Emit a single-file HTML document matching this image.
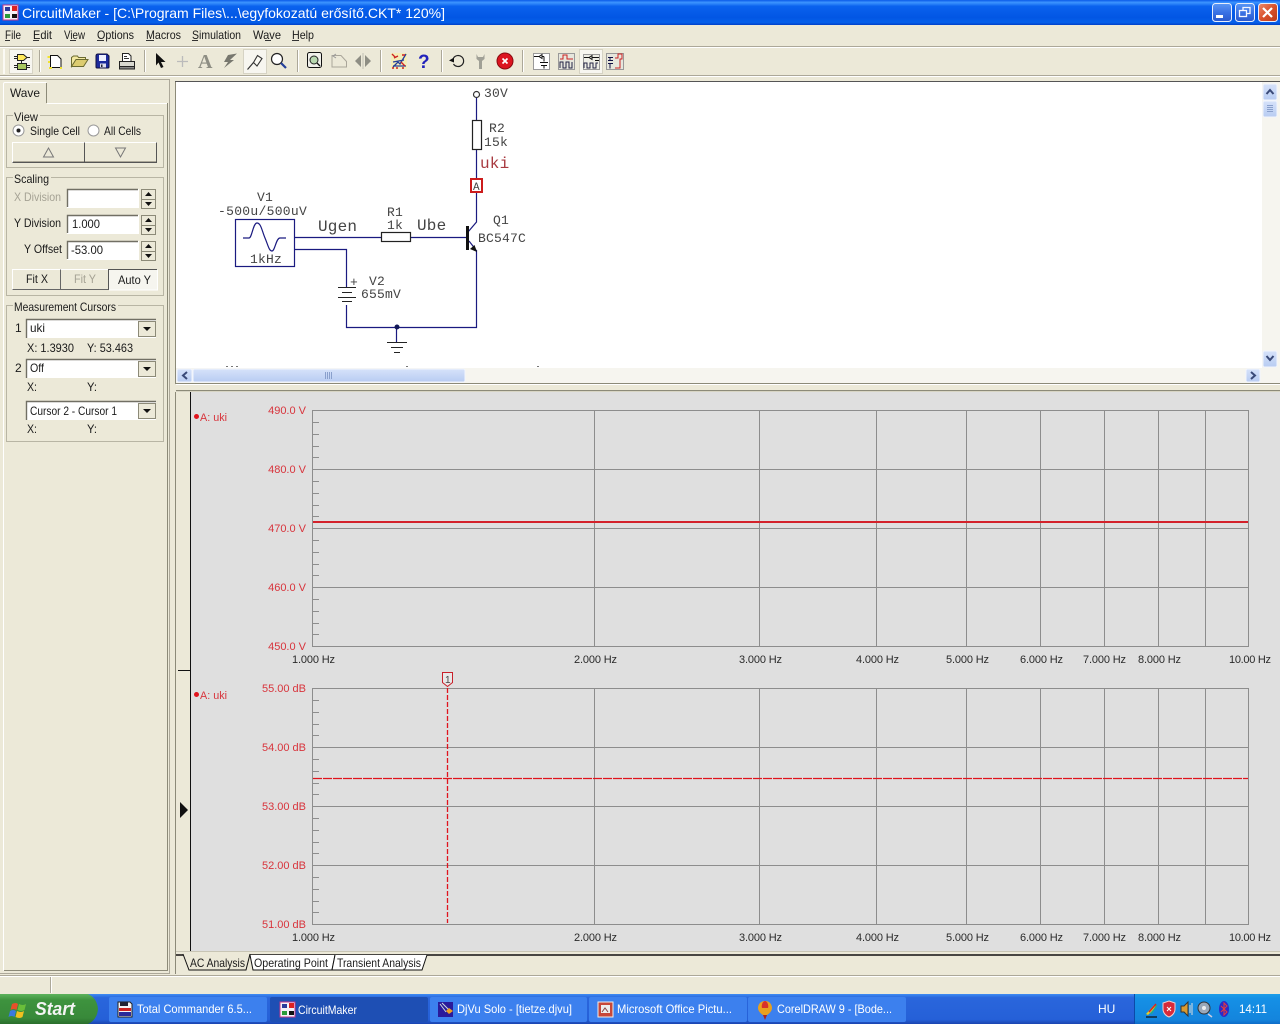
<!DOCTYPE html>
<html><head><meta charset="utf-8"><title>CircuitMaker</title>
<style>
html,body{margin:0;padding:0;background:#ece9d8;width:1280px;height:1024px;overflow:hidden}
svg{display:block;position:absolute;left:0;top:0}
text{font-family:"Liberation Sans",sans-serif;font-size:12px;fill:#1a1a1a;white-space:pre}
.m{font-family:"Liberation Mono",monospace;font-size:13px;fill:#444;letter-spacing:.2px}
.b{font-size:16px;letter-spacing:.2px}
.y{font-size:11px;fill:#d8343c;text-anchor:end}
.x{font-size:11px;fill:#2a2a2a}
.l{font-size:11px;fill:#d8343c}
.t{fill:#fff;font-size:12px}
</style></head><body>
<svg width="1280" height="1024" viewBox="0 0 1280 1024" xmlns="http://www.w3.org/2000/svg">
<defs>
<linearGradient id="tb" x1="0" y1="0" x2="0" y2="1"><stop offset="0" stop-color="#0a5ae8"/><stop offset=".1" stop-color="#3d95ff"/><stop offset=".25" stop-color="#0a62ee"/><stop offset=".7" stop-color="#0256e4"/><stop offset=".9" stop-color="#0560ea"/><stop offset="1" stop-color="#0040c8"/></linearGradient>
<linearGradient id="task" x1="0" y1="0" x2="0" y2="1"><stop offset="0" stop-color="#3f8cf3"/><stop offset=".12" stop-color="#2a66dc"/><stop offset=".85" stop-color="#2560d8"/><stop offset="1" stop-color="#1a44b0"/></linearGradient>
<linearGradient id="st" x1="0" y1="0" x2="0" y2="1"><stop offset="0" stop-color="#5db35d"/><stop offset=".2" stop-color="#3e933e"/><stop offset=".8" stop-color="#38893a"/><stop offset="1" stop-color="#2a6e2c"/></linearGradient>
<linearGradient id="btn" x1="0" y1="0" x2="0" y2="1"><stop offset="0" stop-color="#5a97f5"/><stop offset=".5" stop-color="#3a72e4"/><stop offset="1" stop-color="#2a58cc"/></linearGradient>
<linearGradient id="cl" x1="0" y1="0" x2="1" y2="1"><stop offset="0" stop-color="#ec8a6c"/><stop offset=".5" stop-color="#d9512c"/><stop offset="1" stop-color="#bb3a1a"/></linearGradient>
<linearGradient id="tray" x1="0" y1="0" x2="0" y2="1"><stop offset="0" stop-color="#1c9ee8"/><stop offset=".15" stop-color="#1590e6"/><stop offset=".85" stop-color="#1485dd"/><stop offset="1" stop-color="#0f6cc8"/></linearGradient>
<linearGradient id="sb" x1="0" y1="0" x2="0" y2="1"><stop offset="0" stop-color="#d6e2fa"/><stop offset="1" stop-color="#b8ccf2"/></linearGradient>
</defs>

<rect width="1280" height="1024" fill="#ece9d8"/>
<!-- title bar -->
<rect width="1280" height="25" fill="url(#tb)"/>
<rect x="3" y="5" width="15" height="15" fill="#f4f0f8" stroke="#c33a8a"/>
<rect x="5" y="7" width="5" height="4" fill="#2a3a9a"/><rect x="12" y="6" width="5" height="5" fill="#d22"/><rect x="5" y="14" width="5" height="4" fill="#2a9a3a"/><rect x="12" y="14" width="5" height="4" fill="#111"/>
<text x="22" y="18" textLength="423" lengthAdjust="spacingAndGlyphs" style="font-size:14px;fill:#fff">CircuitMaker - [C:\Program Files\...\egyfokozatú erősítő.CKT* 120%]</text>
<g stroke="#e8eefc" stroke-width="1">
<rect x="1212.5" y="3.5" width="19" height="18" rx="3" fill="url(#btn)"/>
<rect x="1235.5" y="3.5" width="19" height="18" rx="3" fill="url(#btn)"/>
<rect x="1258.5" y="3.5" width="19" height="18" rx="3" fill="url(#cl)"/>
</g>
<rect x="1216" y="15" width="7" height="3" fill="#fff"/>
<g fill="none" stroke="#f4f6ff" stroke-width="1.3"><rect x="1239.5" y="10.5" width="7" height="6"/><path d="M1243 10V7.5h7v6h-3"/></g>
<path d="M1263 8l9 9M1272 8l-9 9" stroke="#fff" stroke-width="2.2"/>

<!-- menu -->
<g>
<text x="5" y="39" textLength="16" lengthAdjust="spacingAndGlyphs">File</text><text x="33" y="39" textLength="19" lengthAdjust="spacingAndGlyphs">Edit</text><text x="64" y="39" textLength="21" lengthAdjust="spacingAndGlyphs">View</text><text x="97" y="39" textLength="37" lengthAdjust="spacingAndGlyphs">Options</text><text x="146" y="39" textLength="35" lengthAdjust="spacingAndGlyphs">Macros</text><text x="192" y="39" textLength="49" lengthAdjust="spacingAndGlyphs">Simulation</text><text x="253" y="39" textLength="28" lengthAdjust="spacingAndGlyphs">Wave</text><text x="292" y="39" textLength="22" lengthAdjust="spacingAndGlyphs">Help</text>
<path d="M5 40.500h5M33 40.500h6M70 40.500h6M97 40.500h7M146 40.500h8M192 40.500h6M265 40.500h6M292 40.500h7" stroke="#333"/>
</g>

<!-- toolbar -->
<rect x="0" y="46" width="1280" height="1" fill="#aca899"/><rect x="0" y="47" width="1280" height="1" fill="#fff"/>
<rect x="0" y="75" width="1280" height="1" fill="#aca899"/><rect x="0" y="76" width="1280" height="1" fill="#fff"/>
<rect x="3" y="49" width="2" height="25" fill="#fbfaf4"/>
<g fill="#aca899"><rect x="39" y="50" width="1" height="22"/><rect x="144" y="50" width="1" height="22"/><rect x="297" y="50" width="1" height="22"/><rect x="380" y="50" width="1" height="22"/><rect x="441" y="50" width="1" height="22"/><rect x="522" y="50" width="1" height="22"/></g>
<g fill="#fff"><rect x="40" y="50" width="1" height="22"/><rect x="145" y="50" width="1" height="22"/><rect x="298" y="50" width="1" height="22"/><rect x="381" y="50" width="1" height="22"/><rect x="442" y="50" width="1" height="22"/><rect x="523" y="50" width="1" height="22"/></g>
<!-- pressed -->
<rect x="9.500" y="49.500" width="23" height="24" fill="#f7f6f0" stroke="#d6d3c4"/>
<rect x="243.500" y="49.500" width="23" height="24" fill="#f7f6f0" stroke="#d6d3c4"/>
<rect x="579.500" y="49.500" width="23" height="24" fill="#f7f6f0" stroke="#d6d3c4"/>
<!-- comp icon -->
<g stroke="#222"><path d="M17.500 54.500h6l3.500 3-3.500 3h-6z" fill="#ffe95a"/><rect x="17.500" y="63.500" width="9" height="6" fill="#a8c860"/><path d="M21.500 60.500v3M14 56.500h3M14 58.500h3M14 65.500h3M14 67.500h3M27 65.500h3M27 67.500h3M27 57.500h3" fill="none"/></g>
<!-- new -->
<path d="M50.500 55.500h7l3.500 3.500v8.500h-10.500z" fill="#fff" stroke="#111"/><path d="M47.500 57h2.500M48 62h2M49 68h3M60 68h2" stroke="#f2e430" stroke-width="2"/>
<!-- open -->
<path d="M71.500 66.500v-9l2-1.500h4l1 1.500h7v2.500h-9.500l-4.500 6.500z" fill="#f2e8a0" stroke="#6a6a30"/><path d="M71.500 66.500h12l4.500-7h-12z" fill="#dccc70" stroke="#6a6a30"/>
<!-- save -->
<path d="M96 56q0-2 2-2h9l2 2v11q0 1-1 1H97q-1 0-1-1z" fill="#1c2a9c" stroke="#101040"/><rect x="99" y="55" width="7" height="6" fill="#eef0ff"/><rect x="100" y="63.500" width="6" height="4" fill="#dde"/><rect x="101" y="64.500" width="1.500" height="2.500" fill="#223"/>
<!-- print -->
<path d="M122.500 53.500h6l2.500 2.500v6h-8.500z" fill="#fff" stroke="#222"/><path d="M124 56.500h3M124 58.500h5" stroke="#333"/><rect x="119.500" y="61.500" width="15" height="5" fill="#d8d8d0" stroke="#222"/><rect x="119.500" y="66.500" width="15" height="2.500" fill="#888" stroke="#222"/>
<!-- pointer -->
<path d="M156 53l9.500 9h-4.500l2.500 5-2.500 1-2.500-5.500-2.500 3z" fill="#111"/>
<path d="M182.500 56v11M177 61.500h11" stroke="#bbb" stroke-width="1.300"/>
<text x="198" y="68" style="font-family:'Liberation Serif',serif;font-size:20px;font-weight:bold;fill:#8e8e84">A</text>
<path d="M237 53.500l-9 1.500-4 7h4l-4 6 10-8h-4l7-6.500z" fill="#77776e"/>
<!-- probe -->
<path d="M247.500 69.500l6-7" stroke="#333" stroke-width="1.200" fill="none"/><path d="M253.500 62.500l4-7 4.500 3-5 7.500z" fill="#fbfaf4" stroke="#333" stroke-width="1.100"/>
<!-- magnifier -->
<circle cx="277" cy="59" r="5.500" fill="#fff" stroke="#222" stroke-width="1.200"/><path d="M281 63l5 5" stroke="#24409a" stroke-width="2.200"/>
<!-- zoom page -->
<rect x="307.500" y="52.500" width="14" height="15" rx="2" fill="#f0f0ea" stroke="#111"/><circle cx="314" cy="60" r="4" fill="#b8d8b0" stroke="#222"/><path d="M317 63l3 3" stroke="#111" stroke-width="1.300"/>
<path d="M332 55.500h9l5.500 6v5.500h-14.500z" fill="none" stroke="#aaa69a"/><path d="M336 58l-3-2 3-2" fill="none" stroke="#999"/>
<path d="M361 55v12l-6-6zM365 55v12l6-6z" fill="#8e8e84"/><path d="M363 53v16" stroke="#c0c0b5"/>
<!-- analog -->
<rect x="391" y="53" width="16" height="16" fill="#f6eeb0" opacity=".8"/><path d="M393 67l5-5 2 2 6-10M393 62l11-2M393 66h13" stroke="#24409a" fill="none" stroke-width="1.300"/><path d="M394 58l4-2M401 62l4 4M392 54l3 3" stroke="#c22" stroke-width="1.300"/><path d="M392 68h2M396 68h2M402 68h2M402 55h3" stroke="#c22" stroke-width="1.500"/>
<text x="418" y="68" style="font-size:19px;font-weight:bold;fill:#2222bb">?</text>
<!-- undo -->
<path d="M453.500 58a5.500 5.500 0 1 1 0 6" fill="none" stroke="#222" stroke-width="1.200"/><path d="M449 60.500l5-3v5z" fill="#111"/>
<path d="M476.500 54v5l2.500 2v8h3v-8l2.500-2v-5l-1.500 3h-5z" fill="#a0a096"/>
<circle cx="505" cy="61" r="8" fill="#dc1420" stroke="#8a0a10"/><path d="M502.500 58.500l5 5M507.500 58.500l-5 5" stroke="#fff" stroke-width="1.700"/>
<!-- wave icons -->
<g fill="none" stroke-width="1">
<rect x="533.500" y="53.500" width="16" height="16" fill="#fff" stroke="#999"/><path d="M534 56.500h5M544 56.500v5M539 56.500l3-2v4zM542 56.500h2M540 62.500h8M541 65.500h6M544 65.500v3" stroke="#111"/>
<rect x="558.500" y="53.500" width="16" height="16" fill="#e6e6dc" stroke="#999"/><path d="M560 59h3v-4h4v4h6" stroke="#c22"/><path d="M560 68v-6h3v6h3v-6h3v6h3v-6" stroke="#224"/>
<rect x="583.500" y="54.500" width="16" height="15" fill="#eeeee6" stroke="#999"/><path d="M584 57.500h5l3-2v4l-3-2M592 57.500h7M595 60.500h4" stroke="#111"/><path d="M584 68v-5h3v5h3v-5h3v5h3v-5h2" stroke="#224"/>
<rect x="606.500" y="53.500" width="17" height="16" fill="#e6e6dc" stroke="#999"/><path d="M608 57.500h5M610 57.500v3M608 60.500h5M608 63.500h5M610 63.500v5" stroke="#114"/><path d="M615 58h3v-4h4v5h-2v9h-5" stroke="#c22"/>
</g>

<!-- left panel -->
<rect x="0" y="79" width="170" height="894" fill="#ece9d8"/>
<path d="M0 79.500H169M0 973.500H170M169.500 79V974" stroke="#aca899"/>
<path d="M3.500 103.500V84q0-1.500 1.500-1.500H46.500" fill="#ece9d8" stroke="#fff"/>
<path d="M46.500 83V103" stroke="#8c8a78"/>
<path d="M3.500 103.500V970.500M47 103.500H167" fill="none" stroke="#fff"/>
<path d="M167.500 103V971" stroke="#8c8a78"/>
<path d="M4 970.500H168" stroke="#8c8a78"/>
<text x="10" y="97" textLength="30" lengthAdjust="spacingAndGlyphs">Wave</text>

<!-- View -->
<g fill="none" stroke="#b8b5a4"><rect x="6.500" y="115.500" width="157" height="52"/><rect x="6.500" y="177.500" width="157" height="118"/><rect x="6.500" y="305.500" width="157" height="136"/></g>
<rect x="13" y="111" width="27" height="12" fill="#ece9d8"/>
<text x="14" y="121" textLength="24" lengthAdjust="spacingAndGlyphs">View</text>
<circle cx="18.500" cy="130.500" r="5.500" fill="#fff" stroke="#999"/><circle cx="18.500" cy="130.500" r="2" fill="#222"/>
<text x="30" y="135" textLength="50" lengthAdjust="spacingAndGlyphs">Single Cell</text>
<circle cx="93.500" cy="130.500" r="5.500" fill="#fff" stroke="#999"/>
<text x="104" y="135" textLength="37" lengthAdjust="spacingAndGlyphs">All Cells</text>
<g stroke="#fff" fill="#ece9d8"><rect x="12.500" y="142.500" width="72" height="20"/><rect x="84.500" y="142.500" width="72" height="20"/></g>
<path d="M12.500 162.500H84.500V142.500M84.500 162.500H156.500V142.500" fill="none" stroke="#555"/>
<path d="M13 161.500H84M85 161.500H156" stroke="#aca899"/>
<path d="M43.500 157h10l-5-9z M115.500 148h10l-5 9z" fill="none" stroke="#777"/>

<!-- Scaling -->
<rect x="13" y="173" width="38" height="12" fill="#ece9d8"/>
<text x="14" y="183" textLength="35" lengthAdjust="spacingAndGlyphs">Scaling</text>
<text x="14" y="201" textLength="47" lengthAdjust="spacingAndGlyphs" style="fill:#a5a294">X Division</text>
<text x="14" y="227" textLength="47" lengthAdjust="spacingAndGlyphs">Y Division</text>
<text x="24" y="253" textLength="38" lengthAdjust="spacingAndGlyphs">Y Offset</text>
<g fill="#fff" stroke="#fff"><rect x="67.500" y="189.500" width="71" height="18"/><rect x="67.500" y="215.500" width="71" height="18"/><rect x="67.500" y="241.500" width="71" height="18"/></g>
<path d="M67.500 207V189.500H138M67.500 233V215.500H138M67.500 259V241.500H138" fill="none" stroke="#716f64" stroke-width="1.400"/>
<text x="72" y="228" textLength="28" lengthAdjust="spacingAndGlyphs">1.000</text><text x="71" y="254" textLength="32" lengthAdjust="spacingAndGlyphs">-53.00</text>
<g>
<rect x="141.500" y="189.500" width="14" height="19" fill="#ece9d8" stroke="#8c8a78"/><path d="M142 199.500h13" stroke="#8c8a78"/><path d="M145 196h7l-3.500-4zM145 202h7l-3.500 4z" fill="#111"/>
<rect x="141.500" y="215.500" width="14" height="19" fill="#ece9d8" stroke="#8c8a78"/><path d="M142 225.500h13" stroke="#8c8a78"/><path d="M145 222h7l-3.500-4zM145 228h7l-3.500 4z" fill="#111"/>
<rect x="141.500" y="241.500" width="14" height="19" fill="#ece9d8" stroke="#8c8a78"/><path d="M142 251.500h13" stroke="#8c8a78"/><path d="M145 248h7l-3.500-4zM145 254h7l-3.500 4z" fill="#111"/>
</g>
<g stroke="#fff" fill="#ece9d8"><rect x="12.500" y="269.500" width="48" height="20"/><rect x="60.500" y="269.500" width="48" height="20"/></g>
<rect x="108.500" y="269.500" width="49" height="20" fill="#f6f5ef"/>
<path d="M12.500 289.500H60.500V269.500M60.500 289.500H108.500V269.500" fill="none" stroke="#666"/>
<path d="M108.500 289.500V269.500H157" fill="none" stroke="#555"/><path d="M157.500 270V290H109" fill="none" stroke="#fff"/>
<text x="26" y="283" textLength="22" lengthAdjust="spacingAndGlyphs">Fit X</text>
<text x="74" y="283" textLength="22" lengthAdjust="spacingAndGlyphs" style="fill:#a5a294">Fit Y</text>
<text x="118" y="284" textLength="33" lengthAdjust="spacingAndGlyphs">Auto Y</text>

<!-- Measurement -->
<rect x="13" y="301" width="105" height="12" fill="#ece9d8"/>
<text x="14" y="311" textLength="102" lengthAdjust="spacingAndGlyphs">Measurement Cursors</text>
<text x="15" y="332">1</text><text x="15" y="372">2</text>
<g fill="#fff"><rect x="26" y="319" width="130" height="19"/><rect x="26" y="359" width="130" height="19"/><rect x="26" y="401" width="130" height="19"/></g>
<path d="M26.500 338V319.500H156M26.500 378V359.500H156M26.500 420V401.500H156" fill="none" stroke="#716f64" stroke-width="1.400"/>
<g fill="#ece9d8" stroke="#8c8a78"><rect x="138.500" y="321.500" width="17" height="15"/><rect x="138.500" y="361.500" width="17" height="15"/><rect x="138.500" y="403.500" width="17" height="15"/></g>
<path d="M143 327h8l-4 4zM143 367h8l-4 4zM143 409h8l-4 4z" fill="#111"/>
<text x="30" y="332" textLength="15" lengthAdjust="spacingAndGlyphs">uki</text>
<text x="30" y="372" textLength="14" lengthAdjust="spacingAndGlyphs">Off</text>
<text x="30" y="415" textLength="87" lengthAdjust="spacingAndGlyphs">Cursor 2 - Cursor 1</text>
<text x="27" y="352" textLength="47" lengthAdjust="spacingAndGlyphs">X: 1.3930</text><text x="87" y="352" textLength="46" lengthAdjust="spacingAndGlyphs">Y: 53.463</text>
<text x="27" y="391" textLength="10" lengthAdjust="spacingAndGlyphs">X:</text><text x="87" y="391" textLength="10" lengthAdjust="spacingAndGlyphs">Y:</text>
<text x="27" y="433" textLength="10" lengthAdjust="spacingAndGlyphs">X:</text><text x="87" y="433" textLength="10" lengthAdjust="spacingAndGlyphs">Y:</text>

<!-- schematic area -->
<path d="M175.500 81V384" stroke="#8c8a78"/>
<path d="M175 81.500H1280" stroke="#555"/>
<rect x="176" y="82" width="1086" height="286" fill="#fff"/>
<rect x="1262" y="82" width="18" height="286" fill="#f6f5ef"/>
<rect x="176" y="368" width="1104" height="15" fill="#f6f5ef"/>
<rect x="1263" y="84" width="14" height="16" rx="1.500" fill="url(#sb)" stroke="#f2f5fc"/>
<path d="M1266.500 94l3.500-4 3.500 4" fill="none" stroke="#3a4a78" stroke-width="2"/>
<rect x="1263" y="101" width="14" height="16" rx="1.500" fill="url(#sb)" stroke="#f2f5fc"/>
<path d="M1267 105.500h6M1267 107.500h6M1267 109.500h6M1267 111.500h6" stroke="#8aa0cc"/>
<rect x="1263" y="351" width="14" height="16" rx="1.500" fill="url(#sb)" stroke="#f2f5fc"/>
<path d="M1266.500 356l3.500 4 3.500-4" fill="none" stroke="#3a4a78" stroke-width="2"/>
<rect x="177" y="369" width="15" height="13" rx="1.500" fill="url(#sb)" stroke="#f2f5fc"/>
<path d="M187 372l-4 3.500 4 3.500" fill="none" stroke="#3a4a78" stroke-width="2"/>
<rect x="193" y="369" width="272" height="13" rx="1.500" fill="url(#sb)" stroke="#f2f5fc"/>
<path d="M325.500 372v7M327.500 372v7M329.500 372v7M331.500 372v7" stroke="#8aa0cc"/>
<rect x="1246" y="369" width="14" height="13" rx="1.500" fill="url(#sb)" stroke="#f2f5fc"/>
<path d="M1251 372l4 3.500-4 3.500" fill="none" stroke="#3a4a78" stroke-width="2"/>
<path d="M226 366.500h2M231 366.500h2M236 366.500h2M406 366.500h2M537 366.500h2" stroke="#777"/>

<!-- circuit -->
<g fill="none" stroke="#1a1a80" stroke-width="1.200">
<circle cx="476.500" cy="94.500" r="3" stroke="#333"/>
<path d="M476.500 98V120M476.500 149V179M476.500 192V222L468 232"/>
<rect x="472.500" y="120.500" width="9" height="29" stroke="#222"/>
<path d="M294 237.500H381M411 237.500H450M450 237.500H466"/>
<rect x="381.500" y="232.500" width="29" height="9" stroke="#222"/>
<path d="M294 249.500H346.500V287M346.500 305V327.500H476.500V250M396.500 327.500V342"/>
<path d="M469 241l7 9"/>
<rect x="235.500" y="219.500" width="59" height="47"/>
<path d="M243 238h6c3 0 4-15 8-15s5 8 8 15 4 13 7 13 4-13 8-13h6"/>
</g>
<rect x="466" y="226" width="3" height="24" fill="#111"/>
<path d="M477 252l-7-3 4.500-4z" fill="#111"/>
<g stroke="#222"><path d="M338 287.500h18M342 292.500h10M338 297.500h18M342 301.500h10"/><path d="M387 342.500h20M391 347.500h12M394 352.500h6"/></g>
<circle cx="397" cy="327" r="2.500" fill="#111858"/>
<rect x="471" y="179" width="11" height="13" fill="#fff" stroke="#cc1c1c" stroke-width="2"/>
<text class="m" x="473" y="190" style="font-size:11px;letter-spacing:0">A</text>
<text class="m" x="484" y="97">30V</text>
<text class="m" x="489" y="132">R2</text>
<text class="m" x="484" y="146">15k</text>
<text class="m b" x="480" y="168" style="fill:#a83a40">uki</text>
<text class="m" x="257" y="201">V1</text>
<text class="m" x="218" y="215" style="letter-spacing:.3px">-500u/500uV</text>
<text class="m b" x="318" y="231">Ugen</text>
<text class="m" x="387" y="216">R1</text>
<text class="m" x="387" y="229">1k</text>
<text class="m b" x="417" y="230">Ube</text>
<text class="m" x="493" y="224">Q1</text>
<text class="m" x="478" y="242">BC547C</text>
<text class="m" x="250" y="263">1kHz</text>
<text class="m" x="350" y="286">+</text>
<text class="m" x="369" y="285">V2</text>
<text class="m" x="361" y="298">655mV</text>

<!-- splitter -->
<path d="M176 383.500H1280" stroke="#8c8a78"/><path d="M176 384.500H1280" stroke="#fff"/>
<path d="M176 390.500H1280" stroke="#8c8a78"/><path d="M176 391.500H1280" stroke="#d8d5c4"/>

<!-- graph area -->
<rect x="191" y="392" width="1089" height="559" fill="#dfdfdf"/>
<rect x="177" y="392" width="13" height="559" fill="#ece9d8"/>
<path d="M190.500 392V951" stroke="#111"/>
<path d="M178 670.500H190" stroke="#111"/>
<path d="M175.500 392V952" stroke="#8c8a78"/>
<path d="M180 802l8 8-8 8z" fill="#111"/>

<!-- grid -->
<g fill="none" stroke="#8d8d8d">
<path d="M312 410.500H1248.500M312 469.500H1248.500M312 528.500H1248.500M312 587.500H1248.500M312 646.500H1248.500"/>
<path d="M312.500 410V647M594.500 410V647M759.500 410V647M876.500 410V647M966.500 410V647M1040.500 410V647M1104.500 410V647M1158.500 410V647M1205.500 410V647M1248.500 410V647"/>
<path d="M312 422.500h7M312 434.500h7M312 446.500h7M312 457.500h7M312 481.500h7M312 493.500h7M312 505.500h7M312 516.500h7M312 540.500h7M312 552.500h7M312 564.500h7M312 575.500h7M312 599.500h7M312 611.500h7M312 623.500h7M312 634.500h7"/>
<path d="M312 688.500H1248.500M312 747.500H1248.500M312 806.500H1248.500M312 865.500H1248.500M312 924.500H1248.500"/>
<path d="M312.500 688V925M594.500 688V925M759.500 688V925M876.500 688V925M966.500 688V925M1040.500 688V925M1104.500 688V925M1158.500 688V925M1205.500 688V925M1248.500 688V925"/>
<path d="M312 700.500h7M312 712.500h7M312 724.500h7M312 735.500h7M312 759.500h7M312 771.500h7M312 783.500h7M312 794.500h7M312 818.500h7M312 830.500h7M312 842.500h7M312 853.500h7M312 877.500h7M312 889.500h7M312 901.500h7M312 912.500h7"/>
</g>
<rect x="313" y="521" width="935" height="2" fill="#d3212a"/>
<path d="M313 778.500H1248" stroke="#e0141e" stroke-dasharray="9 1" stroke-width="1.300"/>
<path d="M447.500 688V923" stroke="#e0141e" stroke-dasharray="5 2" stroke-width="1.300"/>
<path d="M442.500 672.500h10v10l-5 4-5-4z" fill="#e8e8e8" stroke="#c8202a"/>
<text x="445" y="683" style="font-size:10px;fill:#444">1</text>

<circle cx="196.500" cy="416.500" r="2.500" fill="#e0141e"/><text class="l" x="200" y="421" textLength="27" lengthAdjust="spacingAndGlyphs">A: uki</text>
<circle cx="196.500" cy="694.500" r="2.500" fill="#e0141e"/><text class="l" x="200" y="699" textLength="27" lengthAdjust="spacingAndGlyphs">A: uki</text>
<text class="y" x="306" y="414">490.0 V</text><text class="y" x="306" y="473">480.0 V</text><text class="y" x="306" y="532">470.0 V</text><text class="y" x="306" y="591">460.0 V</text><text class="y" x="306" y="650">450.0 V</text>
<text class="y" x="306" y="692">55.00 dB</text><text class="y" x="306" y="751">54.00 dB</text><text class="y" x="306" y="810">53.00 dB</text><text class="y" x="306" y="869">52.00 dB</text><text class="y" x="306" y="928">51.00 dB</text>
<text class="x" x="292" y="663" textLength="43">1.000 Hz</text><text class="x" x="574" y="663" textLength="43">2.000 Hz</text><text class="x" x="739" y="663" textLength="43">3.000 Hz</text><text class="x" x="856" y="663" textLength="43">4.000 Hz</text><text class="x" x="946" y="663" textLength="43">5.000 Hz</text><text class="x" x="1020" y="663" textLength="43">6.000 Hz</text><text class="x" x="1083" y="663" textLength="43">7.000 Hz</text><text class="x" x="1138" y="663" textLength="43">8.000 Hz</text><text class="x" x="1229" y="663" textLength="42">10.00 Hz</text>
<text class="x" x="292" y="941" textLength="43">1.000 Hz</text><text class="x" x="574" y="941" textLength="43">2.000 Hz</text><text class="x" x="739" y="941" textLength="43">3.000 Hz</text><text class="x" x="856" y="941" textLength="43">4.000 Hz</text><text class="x" x="946" y="941" textLength="43">5.000 Hz</text><text class="x" x="1020" y="941" textLength="43">6.000 Hz</text><text class="x" x="1083" y="941" textLength="43">7.000 Hz</text><text class="x" x="1138" y="941" textLength="43">8.000 Hz</text><text class="x" x="1229" y="941" textLength="42">10.00 Hz</text>

<!-- bottom tabs -->
<path d="M176 951.500H1280" stroke="#c8c5b4"/>
<rect x="176" y="952" width="1104" height="22" fill="#ece9d8"/>
<path d="M176 955H1280" stroke="#111" stroke-width="1.500"/>
<path d="M175.500 952V974" stroke="#8c8a78"/>
<path d="M183 954l6 16H246l4-16" fill="#ece9d8" stroke="#111"/>
<path d="M250 955l3 15H332l3-15" fill="#fff" stroke="#111"/>
<path d="M335 955l-3 15H422l5-15" fill="#fff" stroke="#111"/>
<text x="190" y="967" textLength="55" lengthAdjust="spacingAndGlyphs">AC Analysis</text>
<text x="254" y="967" textLength="74" lengthAdjust="spacingAndGlyphs">Operating Point</text>
<text x="337" y="967" textLength="84" lengthAdjust="spacingAndGlyphs">Transient Analysis</text>

<!-- status -->
<path d="M0 975.500H1280" stroke="#aca899"/><path d="M0 976.500H1280" stroke="#fff"/>
<path d="M50.500 977V993" stroke="#aca899"/><path d="M51.500 977V993" stroke="#fff"/>

<!-- taskbar -->
<rect x="0" y="994" width="1280" height="30" fill="url(#task)"/>
<path d="M0 1024V994H88q9 4 10 15-1 11-10 15z" fill="url(#st)"/>
<path d="M12 1004q4-2 6 0l-1.500 6q-3-2-6 0z" fill="#e8502a"/><path d="M19 1004q4 2 7 0l-1.500 6q-3 2-7 0z" fill="#6abe3a"/><path d="M10 1011q3-2 6 0l-1.500 6q-3-2-6 0z" fill="#3a7ae0"/><path d="M17 1011q4 2 7 0l-1.500 6q-3 2-7 0z" fill="#f0c020"/>
<text x="35" y="1015" textLength="40" lengthAdjust="spacingAndGlyphs" style="font-size:18px;font-weight:bold;font-style:italic;fill:#f4f4f4">Start</text>
<g>
<rect x="109" y="997" width="158" height="25" rx="2" fill="#3c80ee"/>
<rect x="270" y="997" width="158" height="25" rx="2" fill="#1e4fb4"/>
<rect x="430" y="997" width="157" height="25" rx="2" fill="#3c80ee"/>
<rect x="589" y="997" width="158" height="25" rx="2" fill="#3c80ee"/>
<rect x="748" y="997" width="158" height="25" rx="2" fill="#3c80ee"/>
</g>
<path d="M118 1002h12l2 2v13h-14z" fill="#f4f4f8" stroke="#222"/><rect x="120" y="1002" width="8" height="4" fill="#223"/><rect x="119" y="1008" width="12" height="3" fill="#c22"/><rect x="119" y="1012" width="12" height="4" fill="#2a2a9a"/>
<rect x="280" y="1002" width="15" height="15" fill="#f4f0f8" stroke="#c33a8a"/><rect x="282" y="1004" width="5" height="4" fill="#2a3a9a"/><rect x="289" y="1003" width="5" height="5" fill="#d22"/><rect x="282" y="1011" width="5" height="4" fill="#2a9a3a"/><rect x="289" y="1011" width="5" height="4" fill="#111"/>
<rect x="438" y="1002" width="15" height="15" fill="#2a1a9a"/><path d="M440 1004l6 8M442 1003l7 7" stroke="#cdd" fill="none"/><path d="M449 1008l4 3-4 3-3-3z" fill="#f0a020"/>
<rect x="598" y="1002" width="15" height="15" fill="#c8483a" stroke="#eee"/><rect x="601" y="1005" width="9" height="8" fill="#eee"/><path d="M602 1012l3-4 3 4" stroke="#844" fill="none"/>
<path d="M765 1001c-5 0-7 4-7 7 0 3 3 6 5 7h4c2-1 5-4 5-7 0-3-2-7-7-7z" fill="#e8a020"/><path d="M765 1001c-2 0-4 4-3 7h6c1-3-1-7-3-7z" fill="#d8302a"/><path d="M763 1015h4l-2 5z" fill="#a22"/>
<text class="t" x="137" y="1013" textLength="115" lengthAdjust="spacingAndGlyphs">Total Commander 6.5...</text>
<text class="t" x="298" y="1014" textLength="59" lengthAdjust="spacingAndGlyphs">CircuitMaker</text>
<text class="t" x="457" y="1013" textLength="115" lengthAdjust="spacingAndGlyphs">DjVu Solo - [tietze.djvu]</text>
<text class="t" x="617" y="1013" textLength="115" lengthAdjust="spacingAndGlyphs">Microsoft Office Pictu...</text>
<text class="t" x="777" y="1013" textLength="115" lengthAdjust="spacingAndGlyphs">CorelDRAW 9 - [Bode...</text>
<text class="t" x="1098" y="1013">HU</text>
<rect x="1134" y="994" width="146" height="30" fill="url(#tray)"/>
<path d="M1134.500 994V1024" stroke="#0c4aa8"/>
<path d="M1146 1014l8-9 2 2-8 8z" fill="#e8d020"/><path d="M1149 1012l7-8" stroke="#d22" stroke-width="1.500"/><path d="M1146 1017h11" stroke="#123" stroke-width="1.500"/><path d="M1151 1014l6-9" stroke="#2a8" stroke-width="1.300"/>
<path d="M1169 1001l6 2v6c0 4-3 7-6 8-3-1-6-4-6-8v-6z" fill="#d82a3a" stroke="#f0d0d0"/><path d="M1167 1007l4 4M1171 1007l-4 4" stroke="#fff"/>
<path d="M1181 1006h3l4-4v14l-4-4h-3z" fill="#d89a30" stroke="#333"/><path d="M1190 1005v8M1192 1003v12" stroke="#ddd"/>
<circle cx="1204" cy="1008" r="6" fill="#9aa8b8" stroke="#333"/><circle cx="1204" cy="1008" r="2" fill="#eee"/><path d="M1208 1014l4 3" stroke="#ccd" stroke-width="1.500"/>
<ellipse cx="1224" cy="1009" rx="5" ry="8" fill="#2a2ac8"/><path d="M1221 1006l6 6-3 3v-12l3 3-6 6" stroke="#e83a3a" fill="none"/>
<text class="t" x="1239" y="1013" textLength="28" lengthAdjust="spacingAndGlyphs">14:11</text>
</svg>
</body></html>
